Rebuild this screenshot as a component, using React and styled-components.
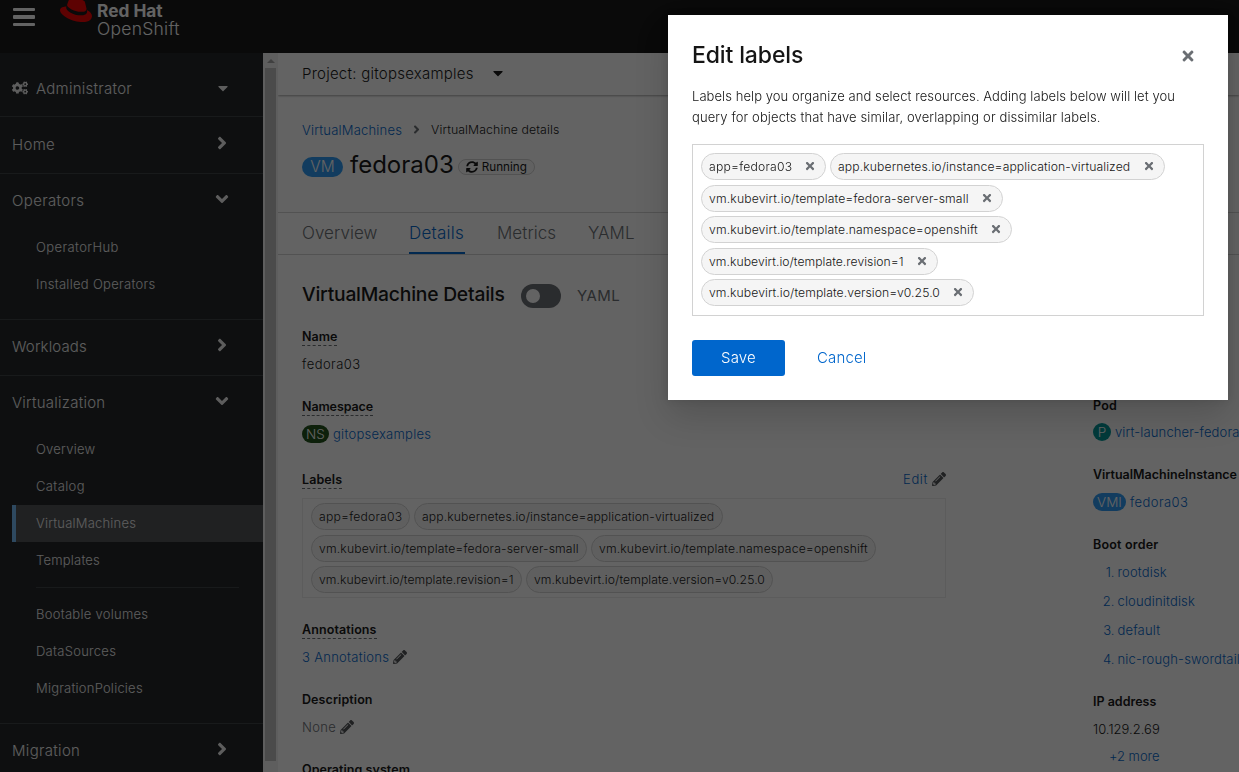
import React from "react";
import styled, { createGlobalStyle } from "styled-components";
import {
  FaAngleDown,
  FaAngleRight,
  FaCaretDown,
  FaCogs,
  FaPencilAlt,
  FaSyncAlt,
  FaTimes,
} from "react-icons/fa";
import { SiRedhat } from "react-icons/si";

const GlobalStyle = createGlobalStyle`
  *, *::before, *::after { box-sizing: border-box; }
  html, body, #root { height: 100%; }
  body {
    margin: 0;
    overflow: hidden;
    background: #fff;
    color: #151515;
    font-family: Inter, "Liberation Sans", sans-serif;
    font-size: 13px;
    font-weight: 350;
  }
  svg { display: block; flex: none; }
`;

const tracking = (p) => (p.$ls || 0) + 0.07;

const Text = styled.span`
  letter-spacing: ${tracking}px;
  white-space: nowrap;
`;

const Page = styled.div`
  display: flex;
  flex-direction: column;
  height: 772px;
  overflow: hidden;
`;

/* Masthead */
const Masthead = styled.header`
  display: flex;
  flex: none;
  align-items: flex-start;
  height: 53px;
  padding-left: 13px;
  background: #151515;
  color: #fff;
  overflow: hidden;
`;

const Burger = styled.div`
  display: grid;
  gap: 4.5px;
  width: 22px;
  margin: 7.5px 25px 0 0;
`;

const BurgerBar = styled.span`
  height: 3.3px;
  border-radius: 1px;
  background: #fff;
`;

const Hat = styled(SiRedhat)`
  width: 32px;
  height: 32px;
  margin: -6px 5px 0 0;
  color: #e00;
`;

const Brand = styled.div`
  display: flex;
  flex-direction: column;
  line-height: 18px;
  font-size: 17.5px;
  padding-top: 1.5px;
`;

const BrandStrong = styled.strong`
  font-size: 17.3px;
  font-weight: 700;
`;

/* Body */
const Body = styled.div`
  display: flex;
  flex: 1;
  min-height: 0;
`;

const Sidebar = styled.nav`
  flex: none;
  width: 263px;
  overflow: hidden;
  background: #212427;
  color: #f0f0f0;
`;

const NavSection = styled.section`
  padding-top: ${(p) => p.$top || 0}px;
  padding-bottom: ${(p) => (p.$open ? 16 : p.$end ?? 1)}px;
  border-bottom: 1px solid #3c3f42;
`;

const NavRow = styled.div`
  display: flex;
  align-items: center;
  justify-content: space-between;
  height: 54px;
  padding: 0 31px 2px 12px;
  font-size: 15px;
`;

const NavTitle = styled.span`
  display: flex;
  align-items: center;
  gap: 8px;
`;

const NavArrow = styled.span`
  display: flex;
  justify-content: center;
  width: 20px;
  margin-top: -2px;
  font-size: 20px;
`;

const NavCaret = styled(FaCaretDown)`
  margin-right: 1px;
  font-size: 16px;
`;

const SubNav = styled.ul`
  list-style: none;
  margin: 1px 0 0;
  padding: 0 0 0 12px;
`;

const SubItem = styled.li`
  display: flex;
  align-items: center;
  height: 37px;
  padding: 0 0 2px 20px;
  border-left: 4px solid ${(p) => (p.$current ? "#73bcf7" : "transparent")};
  background: ${(p) => (p.$current ? "#4f5255" : "transparent")};
`;

const SubDivider = styled.li`
  height: 1px;
  margin: 8px 24px 8px 24px;
  background: #3c3f42;
`;

/* Scrollbar drawn between navigation and page content */
const Scrollbar = styled.div`
  display: flex;
  flex: none;
  flex-direction: column;
  align-items: center;
  width: 15px;
  background: #f1f1f1;
`;

const ScrollArrow = styled.div`
  display: flex;
  align-items: center;
  justify-content: center;
  height: 15px;
`;

const ArrowShape = styled.span`
  border: 4px solid transparent;
  border-top: 0;
  border-bottom-color: #a3a3a3;
`;

const ScrollThumb = styled.div`
  width: 11px;
  height: 693px;
  background: #c1c1c1;
`;

/* Page content */
const Main = styled.main`
  flex: 1;
  min-width: 0;
  overflow: hidden;
  background: #fff;
`;

const ProjectBar = styled.div`
  display: flex;
  align-items: center;
  gap: 16px;
  height: 42px;
  padding: 0 0 2px 24px;
  font-size: 15px;
  box-shadow: 0 1px 2px rgba(3, 3, 3, 0.35);
`;

const ProjectCaret = styled(FaCaretDown)`
  font-size: 16px;
`;

const Breadcrumb = styled.div`
  display: flex;
  align-items: center;
  height: 21px;
  margin: 24px 0 0 24px;
`;

const Link = styled.a`
  color: #06c;
  white-space: nowrap;
  letter-spacing: ${tracking}px;
`;

const CrumbArrow = styled(FaAngleRight)`
  margin: 0 8px 0 8px;
  color: #6a6e73;
  font-size: 13px;
`;

const Crumb = styled.span`
  font-size: 12.3px;
  line-height: 17px;
  letter-spacing: 0.1px;
`;

const TitleRow = styled.div`
  display: flex;
  align-items: center;
  height: 34px;
  margin: 10px 0 0 24px;
`;

const Title = styled.h1`
  margin: -4px 4px 0 7px;
  font-size: 24px;
  font-weight: 400;
  line-height: 30px;
`;

const badgeColors = { vm: "#2b9af3", ns: "#1e4f18", pod: "#009596" };

const Badge = styled.span`
  display: inline-flex;
  align-items: center;
  justify-content: center;
  flex: none;
  width: ${(p) => p.$w}px;
  height: ${(p) => (p.$large ? 20 : 18)}px;
  border-radius: 20px;
  background: ${(p) => badgeColors[p.$kind]};
  color: #fff;
  font-size: ${(p) => (p.$large ? 15.5 : 13.5)}px;
  line-height: 18px;
`;

const Status = styled.span`
  display: inline-flex;
  align-items: center;
  gap: 4px;
  width: 77px;
  height: 16px;
  padding-left: 7px;
  border: 1px solid #d2d2d2;
  border-radius: 8px;
  background: #fafafa;
  font-size: 11.7px;
  font-weight: 400;
`;

const Tabs = styled.div`
  display: flex;
  height: 43px;
  margin-top: 28px;
  padding-left: 24px;
  gap: 32px;
  border-top: 1px solid #d2d2d2;
  border-bottom: 1px solid #d2d2d2;
`;

const Tab = styled.div`
  display: flex;
  align-items: center;
  width: ${(p) => p.$w}px;
  height: 41px;
  padding-bottom: 1px;
  font-size: 17px;
  letter-spacing: ${(p) => (p.$active ? 0.25 : 0.05)}px;
  color: ${(p) => (p.$active ? "#06c" : "#6a6e73")};
  box-shadow: ${(p) => (p.$active ? "inset 0 -2px 0 #06c" : "none")};
`;

const DetailsHead = styled.div`
  display: flex;
  align-items: center;
  height: 40px;
  margin: 21px 0 0 24px;
`;

const Heading = styled.h2`
  width: 203px;
  margin: -4px 16px 0 0;
  font-size: 19.3px;
  font-weight: 500;
  line-height: 26px;
  white-space: nowrap;
  letter-spacing: -0.22px;
`;

const Switch = styled.span`
  display: flex;
  align-items: center;
  width: 40px;
  height: 24px;
  margin-right: 16px;
  padding-left: 5px;
  border-radius: 12px;
  background: #6a6e73;
`;

const SwitchKnob = styled.span`
  width: 14px;
  height: 14px;
  border-radius: 50%;
  background: #fff;
`;

const SwitchLabel = styled.span`
  margin-top: -1px;
  color: #6a6e73;
  font-size: 15px;
  font-weight: 400;
  letter-spacing: 0.4px;
`;

const Columns = styled.div`
  display: grid;
  grid-template-columns: 644px 260px;
  column-gap: 147px;
  margin: 12px 0 0 24px;
`;

const Column = styled.div`
  display: flex;
  flex-direction: column;
  gap: 23px;
  padding-top: ${(p) => p.$top || 0}px;
`;

const Group = styled.div`
  display: flex;
  flex-direction: column;
  gap: ${(p) => p.$gap || 8}px;
`;

const GroupHead = styled.div`
  display: flex;
  align-items: center;
  justify-content: space-between;
  height: 18px;
`;

const Term = styled.span`
  height: 18px;
  font-size: 12.5px;
  font-weight: 600;
  line-height: 17px;
  white-space: nowrap;
  letter-spacing: ${(p) => p.$ls || 0}px;
  border-bottom: 1px ${(p) => (p.$plain ? "solid transparent" : "dashed #6a6e73")};
`;

const Value = styled.div`
  display: flex;
  align-items: center;
  gap: 4px;
  height: 21px;
  margin: ${(p) => p.$up ?? -1}px 0 ${(p) => p.$after ?? 1}px;
  padding-left: ${(p) => p.$indent || 0}px;
  color: ${(p) => (p.$muted ? "#6a6e73" : "inherit")};
  white-space: nowrap;
`;

const Pencil = styled(FaPencilAlt)`
  color: #4f5255;
  font-size: 14px;
`;

const LabelBox = styled.div`
  display: flex;
  flex-wrap: wrap;
  align-content: flex-start;
  gap: 4.5px 4px;
  height: ${(p) => p.$h}px;
  padding: ${(p) => p.$pad};
  border: 1px solid ${(p) => p.$line};
`;

const Chip = styled.span`
  display: inline-flex;
  align-items: center;
  justify-content: space-between;
  width: ${(p) => p.$w}px;
  height: 27px;
  padding: 0 ${(p) => (p.$closable ? 9 : 7)}px 0 7px;
  border: 1px solid #d2d2d2;
  border-radius: 14px;
  background: #f5f5f5;
  font-size: 12.2px;
`;

const ChipClose = styled(FaTimes)`
  margin-top: -1px;
  color: #6a6e73;
  font-size: 12px;
`;

const BootList = styled.ol`
  list-style: none;
  margin: 0;
  padding: 0;
  color: #06c;
  display: grid;
  row-gap: 8px;
`;

const BootItem = styled.li`
  display: grid;
  grid-template-columns: 21.5px 1fr;
  column-gap: 3px;
  height: 21px;
  line-height: 21px;
  white-space: nowrap;
`;

const BootIndex = styled.span`
  text-align: right;
`;

/* Modal */
const Backdrop = styled.div`
  position: fixed;
  inset: 0;
  display: flex;
  align-items: flex-start;
  justify-content: flex-end;
  padding: 15px 11px 0 0;
  background: rgba(3, 3, 3, 0.62);
`;

const Modal = styled.section`
  width: 560px;
  height: 385px;
  padding: 24px;
  background: #fff;
  box-shadow: 0 16px 32px rgba(3, 3, 3, 0.16), 0 0 8px rgba(3, 3, 3, 0.1);
`;

const ModalHead = styled.div`
  display: flex;
  align-items: center;
  justify-content: space-between;
  height: 32px;
  padding-right: 8px;
`;

const ModalTitle = styled.h1`
  margin: 0;
  font-size: 23px;
  font-weight: 500;
  line-height: 31px;
  letter-spacing: -0.13px;
`;

const Close = styled(FaTimes)`
  margin-top: 2px;
  color: #6a6e73;
  font-size: 16px;
`;

const Copy = styled.p`
  display: flex;
  flex-direction: column;
  margin: 15px 0 16px;
  line-height: 21px;
`;

const Actions = styled.div`
  display: flex;
  gap: 32px;
  margin-top: 24px;
`;

const Button = styled.button`
  width: ${(p) => (p.$primary ? "93px" : "auto")};
  height: 36px;
  padding: 0;
  border: 0;
  border-radius: 3px;
  background: ${(p) => (p.$primary ? "#06c" : "transparent")};
  color: ${(p) => (p.$primary ? "#fff" : "#06c")};
  font: 350 15px/36px Inter, "Liberation Sans", sans-serif;
  letter-spacing: 0.15px;
`;

/* text, letter spacing, text width */
const labels = [
  ["app=fedora03", 0.13, 83],
  ["app.kubernetes.io/instance=application-virtualized", 0.03, 293],
  ["vm.kubevirt.io/template=fedora-server-small", 0.08, 260],
  ["vm.kubevirt.io/template.namespace=openshift", 0.07, 269],
  ["vm.kubevirt.io/template.revision=1", -0.03, 195],
  ["vm.kubevirt.io/template.version=v0.25.0", 0.01, 231],
];

const nav = [
  { title: "Home", ls: 0.25, top: 1 },
  {
    title: "Operators",
    ls: 0.3,
    items: [["OperatorHub", 0.33], ["Installed Operators", 0.23]],
  },
  { title: "Workloads", ls: 0.07 },
  {
    title: "Virtualization",
    ls: 0.18,
    items: [
      ["Overview", 0.17],
      ["Catalog", 0.3],
      ["VirtualMachines", 0.13],
      ["Templates", 0.14],
      null,
      ["Bootable volumes", 0.2],
      ["DataSources", 0.2],
      ["MigrationPolicies", 0.15],
    ],
  },
  { title: "Migration", ls: 0.25 },
];

const bootOrder = ["rootdisk", "cloudinitdisk", "default", "nic-rough-swordtail"];

function Navigation() {
  return (
    <Sidebar>
      <NavSection $top={9} $end={0}>
        <NavRow>
          <NavTitle>
            <FaCogs size={16} />
            <Text $ls={0.2}>Administrator</Text>
          </NavTitle>
          <NavCaret />
        </NavRow>
      </NavSection>
      {nav.map((s) => (
        <NavSection key={s.title} $top={s.top} $open={!!s.items}>
          <NavRow>
            <Text $ls={s.ls}>{s.title}</Text>
            <NavArrow>{s.items ? <FaAngleDown /> : <FaAngleRight />}</NavArrow>
          </NavRow>
          {s.items && (
            <SubNav>
              {s.items.map((it, i) =>
                it ? (
                  <SubItem key={it[0]} $current={it[0] === "VirtualMachines"}>
                    <Text $ls={it[1]}>{it[0]}</Text>
                  </SubItem>
                ) : (
                  <SubDivider key={i} />
                )
              )}
            </SubNav>
          )}
        </NavSection>
      ))}
    </Sidebar>
  );
}

function Details() {
  return (
    <Columns>
      <Column>
        <Group>
          <GroupHead><Term>Name</Term></GroupHead>
          <Value><Text $ls={0.4}>fedora03</Text></Value>
        </Group>
        <Group>
          <GroupHead><Term $ls={-0.1}>Namespace</Term></GroupHead>
          <Value $after={4}>
            <Badge $kind="ns" $w={27}>NS</Badge>
            <Link $ls={0.19}>gitopsexamples</Link>
          </Value>
        </Group>
        <Group $gap={9}>
          <GroupHead>
            <Term $ls={0.1}>Labels</Term>
            <Value>
              <Link $ls={0.55}>Edit</Link>
              <Pencil />
            </Value>
          </GroupHead>
          <LabelBox $h={100} $pad="4px 8px" $line="#ededed">
            {labels.map(([t, ls, w]) => (
              <Chip key={t} $w={w + 16}><Text $ls={ls}>{t}</Text></Chip>
            ))}
          </LabelBox>
        </Group>
        <Group>
          <GroupHead><Term $ls={0.1}>Annotations</Term></GroupHead>
          <Value>
            <Link $ls={0.23}>3 Annotations</Link>
            <Pencil />
          </Value>
        </Group>
        <Group>
          <GroupHead><Term $plain $ls={0.08}>Description</Term></GroupHead>
          <Value $muted>
            <Text $ls={0.3}>None</Text>
            <Pencil />
          </Value>
        </Group>
        <Group>
          <GroupHead><Term $plain $ls={0.05}>Operating system</Term></GroupHead>
        </Group>
      </Column>
      <Column $top={69}>
        <Group>
          <GroupHead><Term $plain $ls={0.2}>Pod</Term></GroupHead>
          <Value $up={-2}>
            <Badge $kind="pod" $w={18}>P</Badge>
            <Link $ls={0.07}>virt-launcher-fedora03</Link>
          </Value>
        </Group>
        <Group>
          <GroupHead><Term $plain>VirtualMachineInstance</Term></GroupHead>
          <Value>
            <Badge $kind="vm" $w={33}>VMI</Badge>
            <Link $ls={0.35}>fedora03</Link>
          </Value>
        </Group>
        <Group>
          <GroupHead><Term $plain $ls={0.2}>Boot order</Term></GroupHead>
          <BootList>
            {bootOrder.map((b, i) => (
              <BootItem key={b}>
                <BootIndex>{i + 1}.</BootIndex>
                <Text $ls={0.09}>{b}</Text>
              </BootItem>
            ))}
          </BootList>
        </Group>
        <Group>
          <GroupHead><Term $plain>IP address</Term></GroupHead>
          <div>
            <Value><Text $ls={-0.05}>10.129.2.69</Text></Value>
            <Value $up={6} $indent={16}><Link $ls={-0.1}>+2 more</Link></Value>
          </div>
        </Group>
      </Column>
    </Columns>
  );
}

function EditLabels() {
  return (
    <Backdrop>
      <Modal>
        <ModalHead>
          <ModalTitle>Edit labels</ModalTitle>
          <Close />
        </ModalHead>
        <Copy>
          <Text>
            Labels help you organize and select resources. Adding labels below will let you
          </Text>
          <Text $ls={0.04}>query for objects that have similar, overlapping or dissimilar labels.</Text>
        </Copy>
        <LabelBox $h={172} $pad="8px" $line="#d2d2d2">
          {labels.map(([t, ls, w]) => (
            <Chip key={t} $w={w + 42} $closable>
              <Text $ls={ls}>{t}</Text>
              <ChipClose />
            </Chip>
          ))}
        </LabelBox>
        <Actions>
          <Button $primary>Save</Button>
          <Button>Cancel</Button>
        </Actions>
      </Modal>
    </Backdrop>
  );
}

export default function App() {
  return (
    <>
      <GlobalStyle />
      <Page>
        <Masthead>
          <Burger><BurgerBar /><BurgerBar /><BurgerBar /></Burger>
          <Hat />
          <Brand>
            <BrandStrong>Red Hat</BrandStrong>
            <Text $ls={0.18}>OpenShift</Text>
          </Brand>
        </Masthead>
        <Body>
          <Navigation />
          <Scrollbar>
            <ScrollArrow><ArrowShape /></ScrollArrow>
            <ScrollThumb />
          </Scrollbar>
          <Main>
            <ProjectBar>
              <Text $ls={0.17}>Project: gitopsexamples</Text>
              <ProjectCaret />
            </ProjectBar>
            <Breadcrumb>
              <Link $ls={0.13}>VirtualMachines</Link>
              <CrumbArrow />
              <Crumb>VirtualMachine details</Crumb>
            </Breadcrumb>
            <TitleRow>
              <Badge $kind="vm" $w={41} $large>VM</Badge>
              <Title>fedora03</Title>
              <Status>
                <FaSyncAlt size={12} />
                <span>Running</span>
              </Status>
            </TitleRow>
            <Tabs>
              <Tab $w={75}>Overview</Tab>
              <Tab $w={56} $active>Details</Tab>
              <Tab $w={59}>Metrics</Tab>
              <Tab $w={48}>YAML</Tab>
            </Tabs>
            <DetailsHead>
              <Heading>VirtualMachine Details</Heading>
              <Switch><SwitchKnob /></Switch>
              <SwitchLabel>YAML</SwitchLabel>
            </DetailsHead>
            <Details />
          </Main>
        </Body>
      </Page>
      <EditLabels />
    </>
  );
}
